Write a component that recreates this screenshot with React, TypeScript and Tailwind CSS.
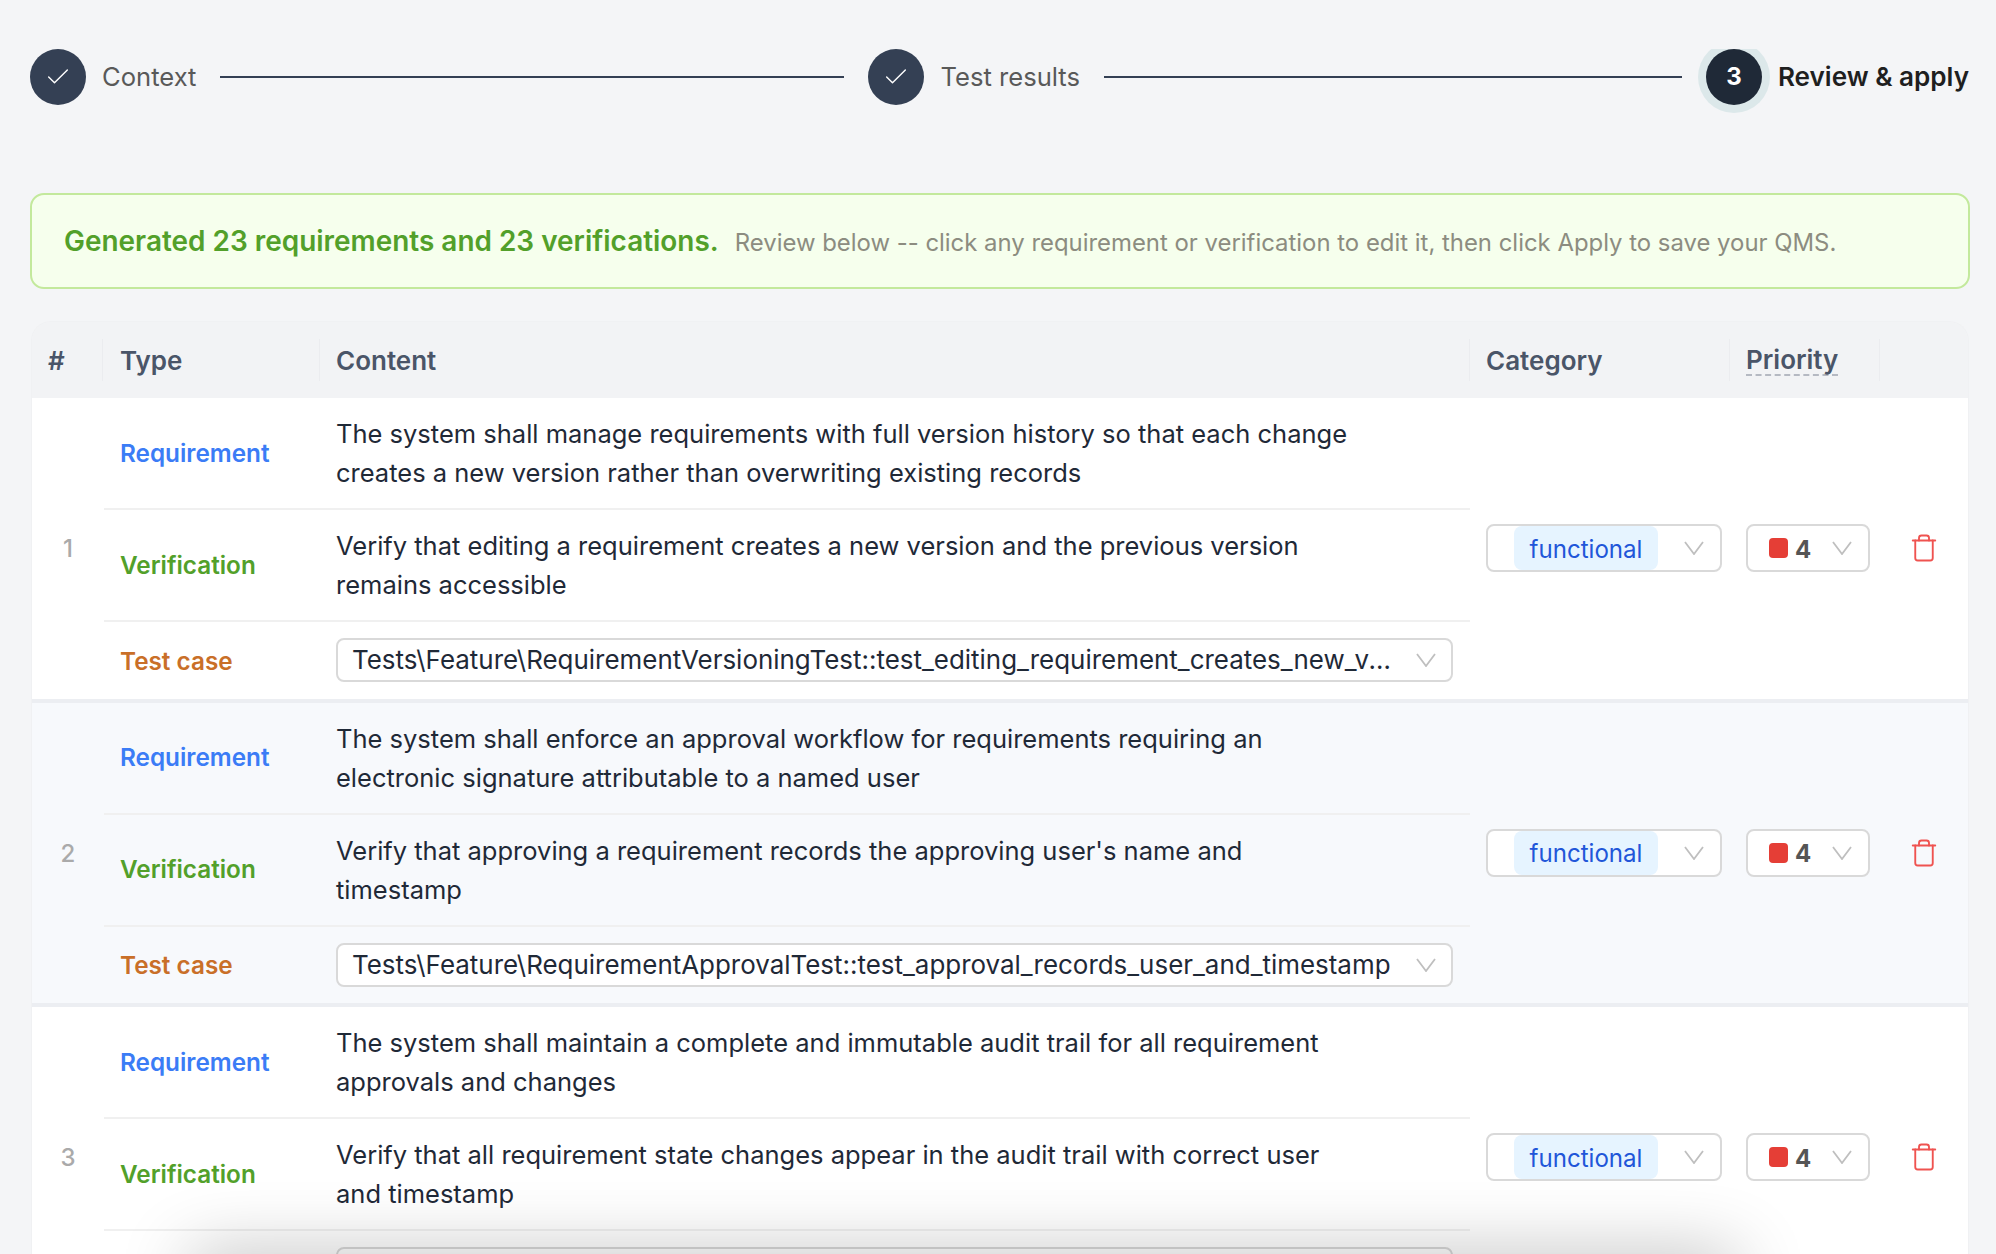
import React from 'react';
import { Check, Trash } from 'lucide-react';

const groups = [
  {
    id: 1,
    req: 'The system shall manage requirements with full version history so that each change creates a new version rather than overwriting existing records',
    ver: 'Verify that editing a requirement creates a new version and the previous version remains accessible',
    test: 'Tests\\Feature\\RequirementVersioningTest::test_editing_requirement_creates_new_version',
  },
  {
    id: 2,
    req: 'The system shall enforce an approval workflow for requirements requiring an electronic signature attributable to a named user',
    ver: "Verify that approving a requirement records the approving user's name and timestamp",
    test: 'Tests\\Feature\\RequirementApprovalTest::test_approval_records_user_and_timestamp',
  },
  {
    id: 3,
    req: 'The system shall maintain a complete and immutable audit trail for all requirement approvals and changes',
    ver: 'Verify that all requirement state changes appear in the audit trail with correct user and timestamp',
    test: 'Tests\\Feature\\RequirementAuditTest::test_state_changes_appear_in_audit_trail',
  },
];

function Chevron() {
  return (
    <svg viewBox="0 0 20 14" className="h-3.5 w-5 shrink-0" fill="none" stroke="#bfbfbf" strokeWidth="1.8">
      <path d="M1 1l9 12 9-12" />
    </svg>
  );
}

function DoneStep({ label }: { label: string }) {
  return (
    <div className="flex items-center gap-4">
      <div className="flex h-14 w-14 items-center justify-center rounded-full bg-[#344054]">
        <Check className="h-7 w-7 text-white" strokeWidth={1.2} />
      </div>
      <span className="text-[25.6px] text-[#595959]">{label}</span>
    </div>
  );
}

function Row({ label, color, text }: { label: string; color: string; text: string }) {
  return (
    <div className="flex h-28 items-center border-b-2 border-[#f0f0f0]">
      <div className={`w-[232px] shrink-0 pl-4 text-[24.3px] font-semibold ${color}`}>{label}</div>
      <div className="max-w-[1025px] text-[25.5px] leading-[39px] text-[#1f2937]">{text}</div>
    </div>
  );
}

export default function App() {
  return (
    <div className="relative h-[1254px] overflow-hidden bg-[#f4f5f7] font-['Inter',sans-serif]">
      {/* stepper, its scroll box cuts the ring off at the top */}
      <div className="mt-[49px] overflow-hidden pb-2">
        <div className="flex h-14 items-center pl-[30px] pr-[27px]">
          <DoneStep label="Context" />
          <div className="mx-6 h-0.5 w-[624px] bg-[#344054]" />
          <DoneStep label="Test results" />
          <div className="mx-6 h-0.5 flex-1 bg-[#344054]" />
          <div className="flex items-center gap-4">
            <div className="flex h-14 w-14 items-center justify-center rounded-full bg-[#1f2937] text-[24px] font-bold text-white shadow-[0_0_0_8px_#dce8ea]">
              3
            </div>
            <span className="text-[26.1px] font-semibold text-[#1f1f1f]">Review &amp; apply</span>
          </div>
        </div>
      </div>

      {/* banner */}
      <div className="ml-[30px] mr-[26px] mt-20 flex h-24 items-center gap-[16px] rounded-[14px] border-2 border-[#c3e99c] bg-[#f6ffed] pl-[32px]">
        <span className="pt-[2px] text-[27.95px] font-semibold text-[#52a02a]">Generated 23 requirements and 23 verifications.</span>
        <span className="pt-[3px] text-[23.9px] text-[#8c8c80]">
          Review below -- click any requirement or verification to edit it, then click Apply to save your QMS.
        </span>
      </div>

      {/* table */}
      <div className="ml-[31px] mr-[27px] mt-8 overflow-hidden rounded-t-[20px] border border-b-0 border-[#f0f1f3]">
        <div className="flex h-[76px] items-center bg-[#f2f3f5] text-[26px] font-semibold text-[#4a5568]">
          <div className="w-[70px] pl-4">#</div>
          <div className="flex h-[42px] w-[217px] items-center border-l border-[#ebecef] pl-[17px]">Type</div>
          <div className="flex h-[42px] w-[1150px] items-center border-l border-[#ebecef] pl-4">Content</div>
          <div className="flex h-[42px] w-[260px] items-center border-l border-[#ebecef] pl-4">Category</div>
          <div className="flex h-[42px] w-[150px] items-center border-l border-[#ebecef] pl-4">
            <span className="border-b-2 border-dashed border-[#b5b9c2] pt-[2px] leading-[28px]">Priority</span>
          </div>
          <div className="h-[42px] flex-1 border-l border-[#ebecef]" />
        </div>

        {groups.map((g) => (
          <div
            key={g.id}
            className={`flex h-[304.5px] border-b-4 border-[#eceef2] ${g.id === 2 ? 'bg-[#f7f9fc]' : 'bg-white'}`}
          >
            <div className="flex w-[72px] shrink-0 items-center justify-center pt-[2px] text-[24px] font-medium text-[#aaaaaa]">
              {g.id}
            </div>
            <div className="w-[1366px] shrink-0">
              <Row label="Requirement" color="text-[#3b7cf6]" text={g.req} />
              <Row label="Verification" color="text-[#52a02a]" text={g.ver} />
              <div className="flex h-[76.5px] items-center">
                <div className="w-[232px] shrink-0 pl-4 pt-[1px] text-[24.3px] font-semibold text-[#c96f28]">Test case</div>
                <div className="flex h-11 w-[1117px] items-center rounded-lg border-2 border-[#d9d9d9] bg-white pl-[14px] pr-[15px]">
                  <span className="mr-5 flex-1 truncate pt-[1px] text-[25.95px] text-[#1f2937]">{g.test}</span>
                  <Chevron />
                </div>
              </div>
            </div>
            <div className="flex flex-1 items-center pl-[16px]">
              <div className="flex h-12 w-[236px] items-center rounded-lg border-2 border-[#d9d9d9] bg-white pl-[26px] pr-[16px]">
                <span className="flex h-11 w-[144px] items-center justify-center rounded-lg bg-[#e6f4ff] pt-[3px] text-[24.1px] text-[#2156d9]">
                  functional
                </span>
                <span className="flex-1" />
                <Chevron />
              </div>
              <div className="ml-[24px] flex h-12 w-[124px] items-center rounded-lg border-2 border-[#d9d9d9] bg-white pl-[21px] pr-[16px]">
                <span className="h-5 w-[19px] rounded-[4px] bg-[#e53e36]" />
                <span className="ml-[7px] pt-[3px] text-[24px] font-bold text-[#555555]">4</span>
                <span className="flex-1" />
                <Chevron />
              </div>
              <Trash className="ml-[39px] h-[30px] w-[30px] text-[#ef5350]" strokeWidth={1.5} />
            </div>
          </div>
        ))}
      </div>

      {/* shadow of the sticky footer, which sits below the fold */}
      <div className="absolute bottom-[-46px] left-[190px] right-[260px] h-11 shadow-[0_0_70px_0_rgba(0,0,0,0.3)]" />
    </div>
  );
}
